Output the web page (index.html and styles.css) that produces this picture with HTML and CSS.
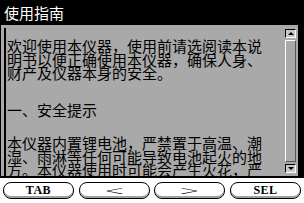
FILE: index.html
```
<!DOCTYPE html>
<html>
<head>
<meta charset="utf-8">
<link rel="stylesheet" href="styles.css">
</head>
<body>
<div class="window">
  <div class="title">使用指南</div>
  <div class="body">
    <div class="text">
      <p class="para">欢迎使用本仪器，使用前请选阅读本说明书以便正确使用本仪器，确保人身、财产及仪器本身的安全。</p>
      <p class="para head">一、安全提示</p>
      <p class="para last">本仪器内置锂电池，严禁置于高温、潮湿、雨淋等任何可能导致电池起火的地方。本仪器使用时可能会产生火花，严禁在易燃易爆场所使用。</p>
    </div>
    <div class="scroll">
      <div class="arrow"><span class="tri up"></span></div>
      <div class="track"><div class="thumb"></div></div>
      <div class="arrow"><span class="tri down"></span></div>
    </div>
  </div>
</div>
<div class="buttons">
  <div class="btn"><span class="lbl">TAB</span></div>
  <div class="btn"><span class="chev">&lt;</span></div>
  <div class="btn"><span class="chev">&gt;</span></div>
  <div class="btn"><span class="lbl">SEL</span></div>
</div>
</body>
</html>
```
FILE: styles.css
```
html, body {
  margin: 0;
  padding: 0;
}
body {
  width: 304px;
  height: 203px;
  overflow: hidden;
  background: #ffffff;
  font-family: "Noto Sans CJK SC", sans-serif;
}
.window {
  height: 178px;
  box-sizing: border-box;
  background: #a9a9a9;
  border-left: 1px solid #000;
  border-right: 6px solid #000;
  border-bottom: 2px solid #000;
  display: flex;
  flex-direction: column;
}
.title {
  height: 25px;
  flex: none;
  background: #000;
  color: #fff;
  font-size: 15px;
  line-height: 25px;
  padding-left: 3px;
  margin-right: -6px;
}
.body {
  flex: 1;
  min-height: 0;
  display: flex;
  padding: 3px 2px 0 3px;
}
.text {
  flex: 1;
  min-width: 0;
  border-left: 2px solid #000;
  padding: 11px 0 0 1px;
  overflow: hidden;
  font-size: 15px;
  line-height: 13.5px;
  color: #000;
}
.para {
  margin: 0;
  width: 256px;
}
.head {
  margin-top: 23px;
}
.last {
  margin-top: 20px;
}
.scroll {
  width: 11px;
  flex: none;
  display: flex;
  flex-direction: column;
  gap: 2px;
  padding: 1px 0 3px;
}
.arrow {
  height: 9px;
  flex: none;
  box-sizing: border-box;
  border: 1px solid #000;
  border-right-color: #fff;
  border-bottom-color: #fff;
  background: #c8c8c8;
  display: flex;
  align-items: center;
  justify-content: center;
}
.tri {
  width: 0;
  height: 0;
  border-left: 3px solid transparent;
  border-right: 3px solid transparent;
}
.tri.up {
  border-bottom: 3px solid #000;
}
.tri.down {
  border-top: 3px solid #000;
}
.track {
  flex: 1;
  display: flex;
}
.thumb {
  flex: 1;
  border: 1px solid #fff;
  border-right-color: #555;
  border-bottom-color: #555;
}
.buttons {
  display: flex;
  justify-content: space-between;
  padding: 4px 3px 0 3px;
}
.btn {
  width: 71px;
  height: 17px;
  box-sizing: border-box;
  border: 1px solid #000;
  border-radius: 8px;
  background: #fff;
  box-shadow: inset 0 -2px 0 #a0a0a0;
  display: flex;
  align-items: center;
  justify-content: center;
  padding-bottom: 1px;
}
.lbl {
  font-family: "Liberation Serif", serif;
  font-weight: bold;
  font-size: 12px;
  line-height: 12px;
  letter-spacing: 0.5px;
}
.chev {
  font-family: "DejaVu Sans", sans-serif;
  font-weight: 200;
  font-size: 13px;
  line-height: 13px;
  transform: scaleX(1.9);
}
```
